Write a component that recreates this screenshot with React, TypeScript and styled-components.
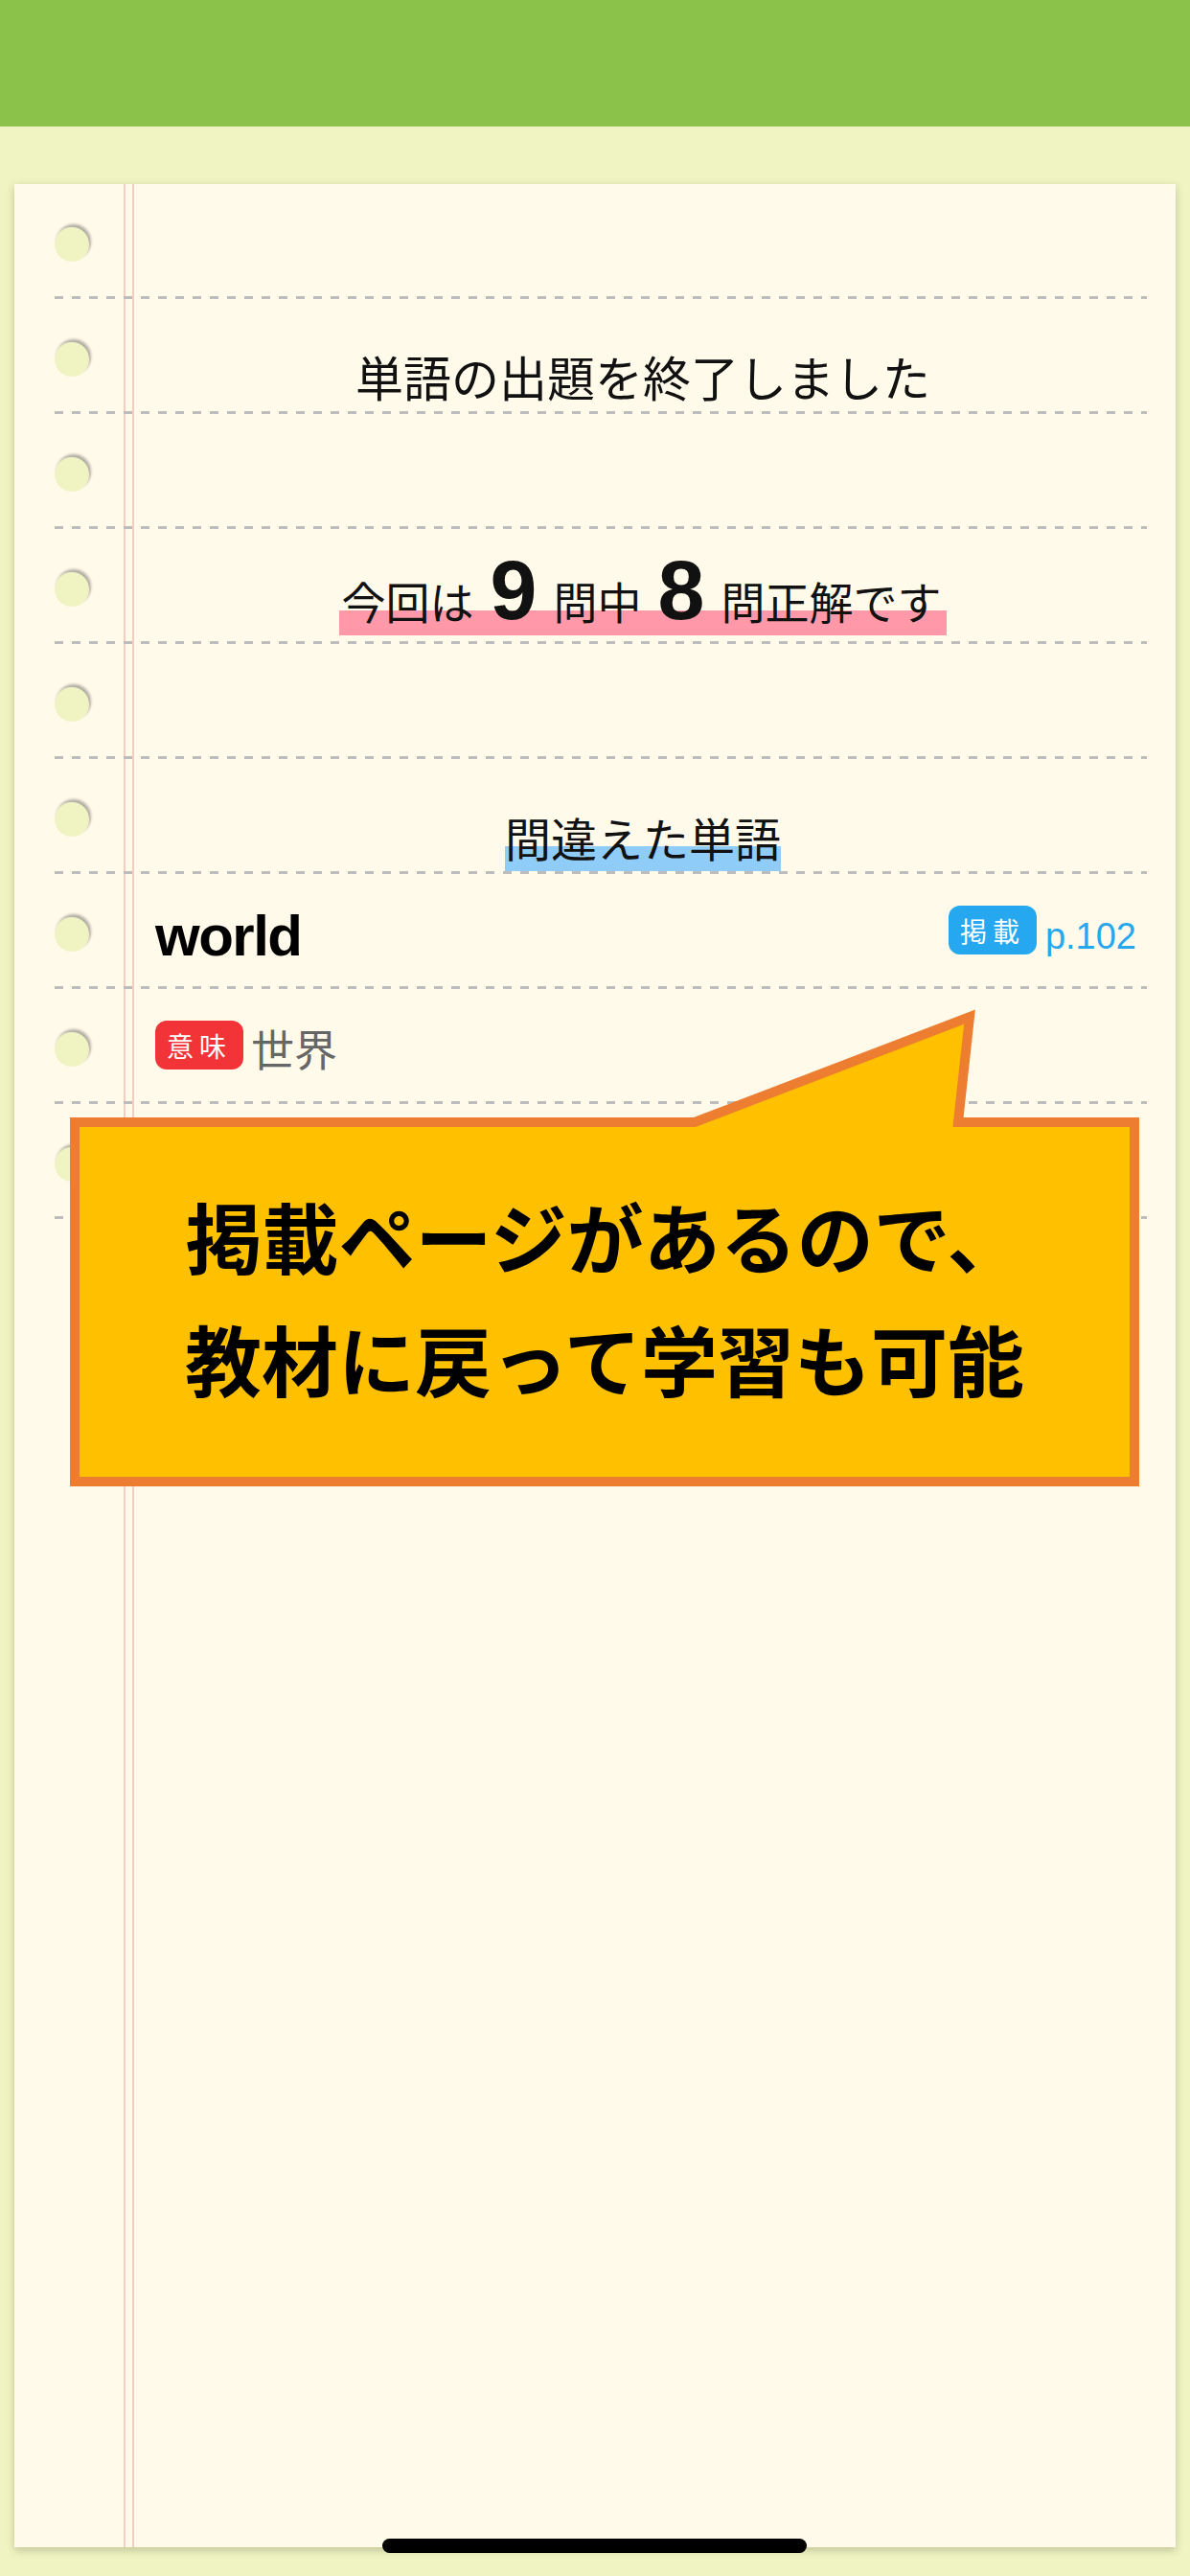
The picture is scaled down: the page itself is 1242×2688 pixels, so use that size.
import styled, { createGlobalStyle } from 'styled-components'

const GlobalStyle = createGlobalStyle`
  html, body {
    margin: 0;
    padding: 0;
  }
  body {
    background: #F0F4C3;
    font-family: "Noto Sans CJK JP", "Noto Sans", sans-serif;
  }
`

const Screen = styled.div`
  position: relative;
  width: 1242px;
  height: 2688px;
  overflow: hidden;
  background: #F0F4C3;
`

const Header = styled.header`
  height: 132px;
  background: #8BC34A;
`

const Paper = styled.main`
  position: relative;
  box-sizing: border-box;
  height: 2466px;
  margin: 60px 15px 0;
  padding: 0 30px 0 42px;
  background:
    linear-gradient(90deg,
      transparent 114px, #F7CDBF 114px, #F7CDBF 116.5px, transparent 116.5px,
      transparent 123px, #F7CDBF 123px, #F7CDBF 125.5px, transparent 125.5px),
    #FFFAEA;
  box-shadow: 0 3px 8px rgba(80, 80, 40, 0.3);
`

// dashed ruling drawn as a gradient so the dash length is fixed (9px on, 9px off)
const Row = styled.div`
  display: flex;
  box-sizing: border-box;
  height: 120px;
  padding-bottom: 3px;
  background: repeating-linear-gradient(90deg, #BDBDBD 0 9px, transparent 9px 18px) left bottom / 100% 3px no-repeat;
`

const Hole = styled.span`
  flex: none;
  align-self: center;
  width: 36px;
  height: 36px;
  margin-top: 9px;
  border-radius: 50%;
  background: #F0F4C3;
  box-shadow: 2px -3px 3px rgba(0, 0, 0, 0.3);
`

interface LineProps {
  $justify?: string
  $align?: string
  $pb?: number
  $pl?: number
  $pr?: number
}

const Line = styled.div<LineProps>`
  flex: 1;
  display: flex;
  justify-content: ${p => p.$justify ?? 'center'};
  align-items: ${p => p.$align ?? 'flex-end'};
  margin-left: 52px;
  padding: 0 ${p => p.$pr ?? 0}px ${p => p.$pb ?? 0}px ${p => p.$pl ?? 0}px;
`

const Title = styled.p<{ $size: number }>`
  margin: 0;
  font-size: ${p => p.$size}px;
  line-height: 1;
  color: #111;
  white-space: nowrap;
`

interface MarkerProps {
  $color: string
  $size: number
  $pad: string
}

const Marker = styled.span<MarkerProps>`
  display: block;
  padding: ${p => p.$pad};
  font-size: ${p => p.$size}px;
  line-height: 1;
  color: #111;
  white-space: nowrap;
  background: linear-gradient(${p => p.$color}, ${p => p.$color}) left bottom / 100% 26px no-repeat;
`

const Num = styled.span`
  margin: 0 17px;
  font-family: "Liberation Sans", Arial, sans-serif;
  font-size: 88px;
  font-weight: 700;
`

const Word = styled.span`
  margin-top: 12px;
  font-family: "Liberation Sans", Arial, sans-serif;
  font-size: 60px;
  font-weight: 700;
  letter-spacing: -1.5px;
  line-height: 1;
  color: #000;
`

const Pair = styled.div<{ $gap: number }>`
  display: flex;
  align-items: flex-end;
  gap: ${p => p.$gap}px;
`

const Badge = styled.span<{ $color: string }>`
  display: flex;
  align-items: center;
  justify-content: center;
  box-sizing: border-box;
  width: 92px;
  height: 51px;
  border-radius: 12px;
  background: ${p => p.$color};
  color: #fff;
  font-size: 28px;
  letter-spacing: 6px;
  line-height: 1;
`

const PageNo = styled.span`
  font-family: "Liberation Sans", Arial, sans-serif;
  font-size: 38px;
  line-height: 1;
  color: #27A8EE;
`

const Meaning = styled.span`
  font-size: 45px;
  line-height: 1;
  color: #666;
`

const Callout = styled.div`
  position: absolute;
  left: 58px;
  top: 859px;
  width: 1116px;
  height: 500px;
`

const CalloutShape = styled.svg`
  position: absolute;
  left: 0;
  top: 0;
  overflow: visible;
`

const CalloutBody = styled.div`
  position: relative;
  display: flex;
  align-items: center;
  justify-content: center;
  height: 385px;
  margin-top: 115px;
`

const CalloutText = styled.p`
  margin: 0 0 14px;
  font-size: 80px;
  font-weight: 700;
  line-height: 128px;
  text-align: center;
  color: #000;
`

const HomeBar = styled.div`
  position: absolute;
  left: 399px;
  top: 2649px;
  width: 443px;
  height: 15px;
  border-radius: 8px;
  background: #000;
`

function App() {
  return (
    <>
      <GlobalStyle />
      <Screen>
        <Header />
        <Paper>
          <Row><Hole /></Row>
          <Row>
            <Hole />
            <Line $pb={12}>
              <Title $size={50}>単語の出題を終了しました</Title>
            </Line>
          </Row>
          <Row><Hole /></Row>
          <Row>
            <Hole />
            <Line $pb={6}>
              <Marker $color="#FF99AA" $size={46} $pad="0 6px 3px 3px">
                今回は<Num>9</Num>問中<Num>8</Num>問正解です
              </Marker>
            </Line>
          </Row>
          <Row><Hole /></Row>
          <Row>
            <Hole />
            <Line>
              <Marker $color="#8FCCF8" $size={48} $pad="0 0 12px">間違えた単語</Marker>
            </Line>
          </Row>
          <Row>
            <Hole />
            <Line $justify="space-between" $align="center" $pl={17} $pr={11}>
              <Word>world</Word>
              <Pair $gap={9}>
                <Badge $color="#25A8F0">掲載</Badge>
                <PageNo>p.102</PageNo>
              </Pair>
            </Line>
          </Row>
          <Row>
            <Hole />
            <Line $justify="flex-start" $align="center" $pl={17}>
              <Pair $gap={8}>
                <Badge $color="#F23439">意味</Badge>
                <Meaning>世界</Meaning>
              </Pair>
            </Line>
          </Row>
          <Row><Hole /></Row>

          <Callout>
            <CalloutShape width="1116" height="500" viewBox="0 0 1116 500">
              <polygon
                points="5,120 652,120 939,10 927,120 1111,120 1111,495 5,495"
                fill="#FFC000"
                stroke="#ED7D31"
                strokeWidth="10"
                strokeLinejoin="miter"
              />
            </CalloutShape>
            <CalloutBody>
              <CalloutText>
                掲載ページがあるので、
                <br />
                教材に戻って学習も可能
              </CalloutText>
            </CalloutBody>
          </Callout>
        </Paper>
        <HomeBar />
      </Screen>
    </>
  )
}

export default App
